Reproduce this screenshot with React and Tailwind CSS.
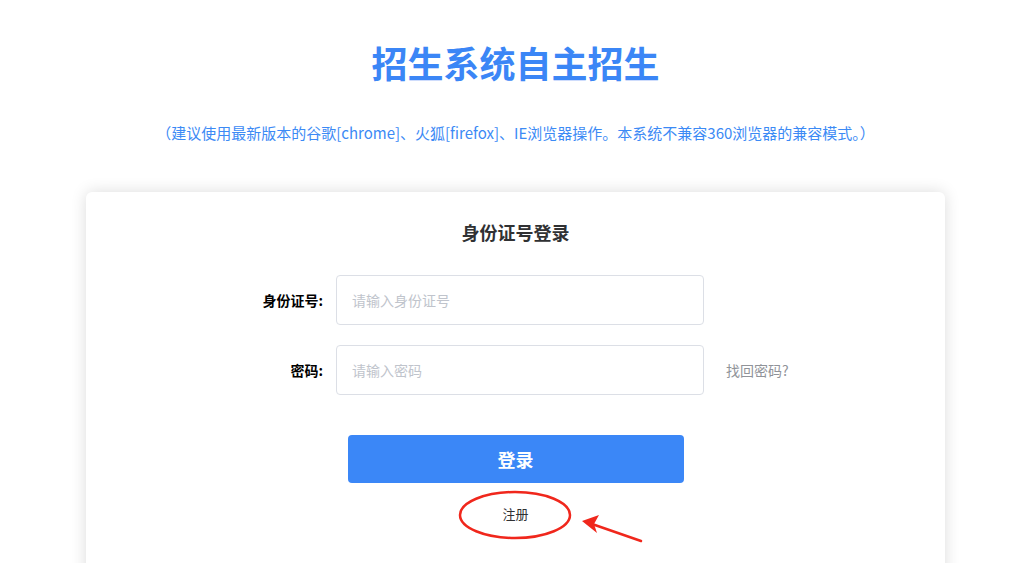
import React from "react";

const font = { fontFamily: '"Noto Sans CJK SC", "Noto Sans", "Liberation Sans", sans-serif' };

export default function App() {
  return (
    <div
      className="min-h-[563px] bg-white pl-[10px] overflow-hidden"
      style={font}
    >
      {/* Header */}
      <h1 className="pt-[35px] text-center text-[36px] leading-[54px] font-bold text-[#3b86f6]">
        招生系统自主招生
      </h1>
      <p className="mt-[34px] text-center text-[15px] leading-[20px] text-[#3c8af5]">
        （建议使用最新版本的谷歌[chrome]、火狐[firefox]、IE浏览器操作。本系统不兼容360浏览器的兼容模式。）
      </p>

      {/* Login card */}
      <div className="relative mx-auto mt-[49px] w-[859px] h-[400px] rounded-md bg-white shadow-[0_0_16px_rgba(0,0,0,0.14)]">
        <h2 className="pt-[27px] text-center text-[18px] leading-[26px] font-bold text-[#303133]">
          身份证号登录
        </h2>

        <div className="mt-[30px] flex flex-col gap-[20px] pl-[157px]">
          <div className="flex items-center">
            <label className="w-[80px] text-right text-[14px] font-bold text-black">身份证号:</label>
            <input
              className="ml-[13px] w-[368px] h-[50px] rounded border border-[#dcdfe6] px-[15px] text-[14px] placeholder:text-[#c0c4cc] outline-none"
              placeholder="请输入身份证号"
            />
          </div>
          <div className="flex items-center">
            <label className="w-[80px] text-right text-[14px] font-bold text-black">密码:</label>
            <input
              type="password"
              className="ml-[13px] w-[368px] h-[50px] rounded border border-[#dcdfe6] px-[15px] text-[14px] placeholder:text-[#c0c4cc] outline-none"
              placeholder="请输入密码"
            />
            <a className="ml-[22px] text-[14px] text-[#909399]">找回密码?</a>
          </div>
        </div>

        <div className="mt-[40px] flex flex-col items-center">
          <button className="w-[336px] h-[48px] rounded bg-[#3b87f7] text-[18px] font-bold text-white">
            登录
          </button>
          <a className="mt-[22px] text-[13px] leading-[18px] text-[#303133]">注册</a>
        </div>
      </div>

      {/* Annotation: red ellipse + arrow */}
      <svg
        className="pointer-events-none absolute left-0 top-0"
        width="1021"
        height="563"
        viewBox="0 0 1021 563"
      >
        <ellipse cx="515" cy="515" rx="55" ry="23" fill="none" stroke="#f0271c" strokeWidth="2.5" />
        <path d="M641 541 L592 524" stroke="#f0271c" strokeWidth="2.5" strokeLinecap="round" />
        <path d="M582 521 L599 515 L594 524 L597 533 Z" fill="#f0271c" />
      </svg>
    </div>
  );
}
